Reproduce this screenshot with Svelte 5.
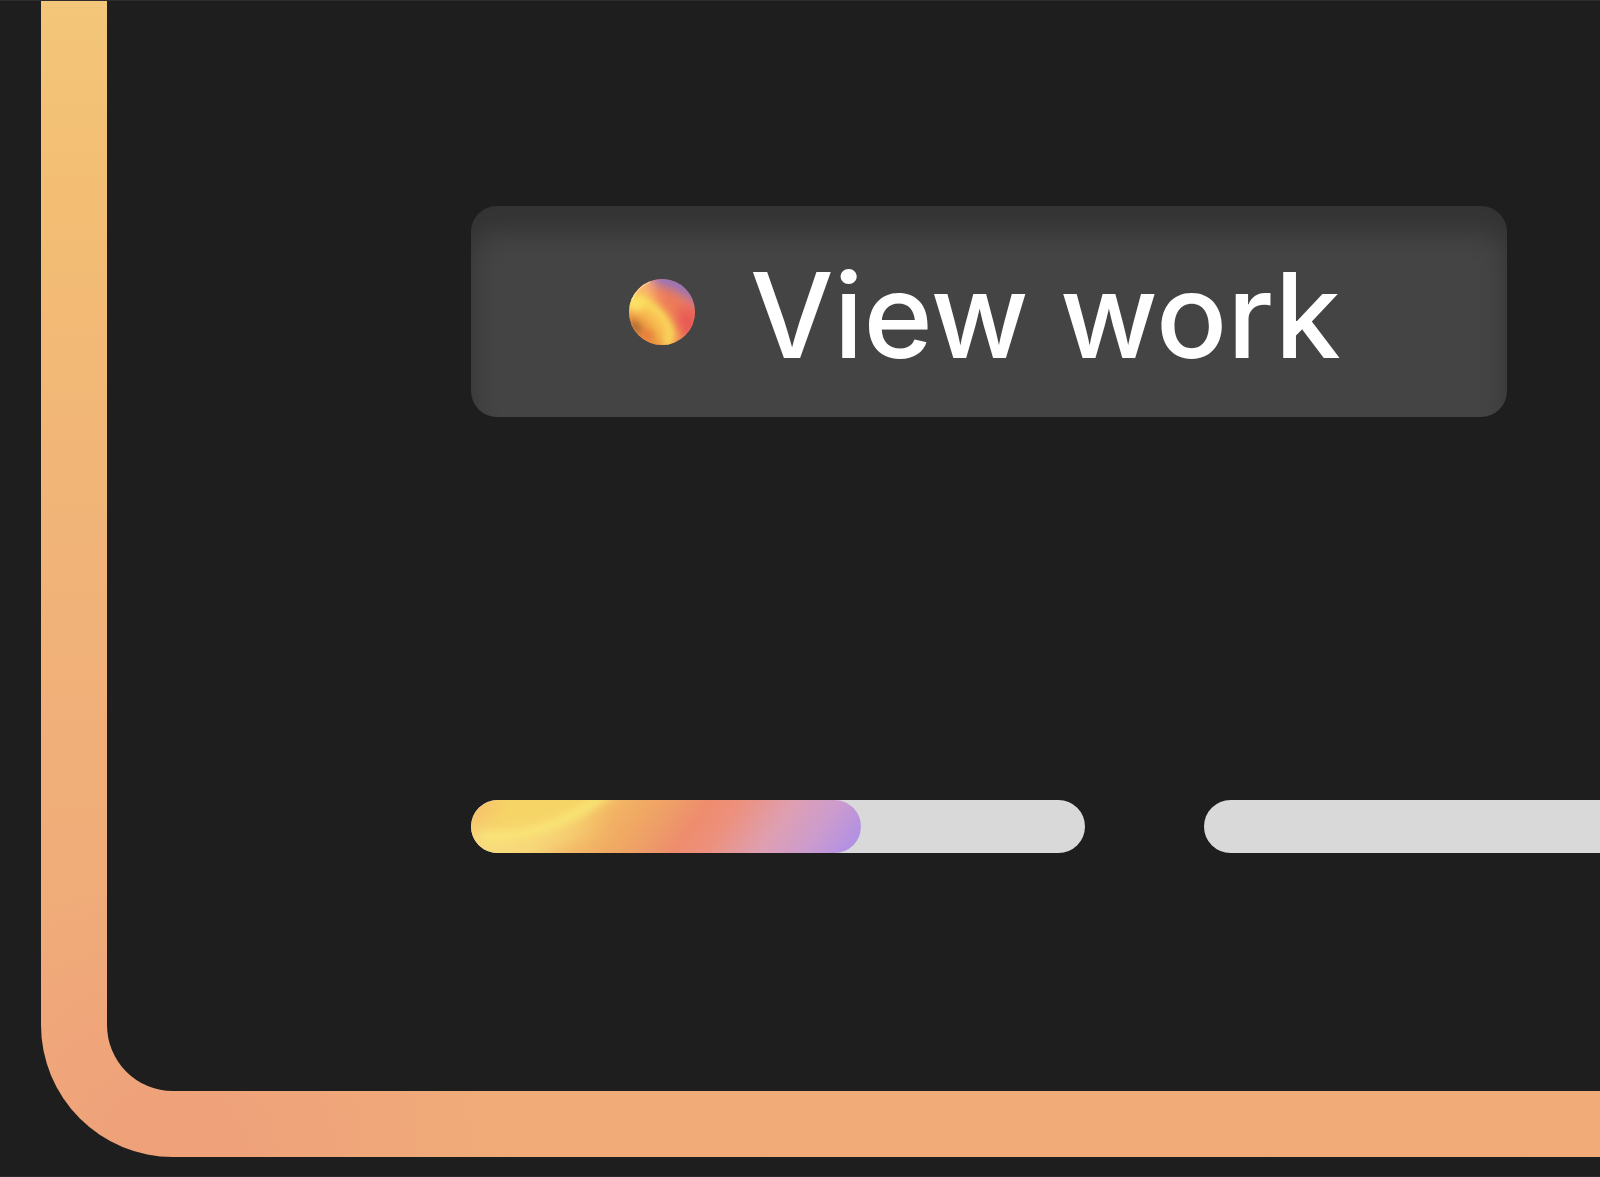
<script>
  const slides = [
    { label: 'Slide 1', value: 63.5 },
    { label: 'Slide 2', value: 0 }
  ];
</script>

<main class="page">
  <section class="frame">
    <div class="panel">
      <button class="view" type="button">
        <svg class="orb" viewBox="0 0 66 66" aria-hidden="true">
          <defs>
            <clipPath id="orb-clip"><circle cx="33" cy="33" r="33" /></clipPath>
            <filter id="orb-soft" x="-50%" y="-50%" width="200%" height="200%">
              <feGaussianBlur stdDeviation="6" />
            </filter>
            <filter id="orb-fine" x="-50%" y="-50%" width="200%" height="200%">
              <feGaussianBlur stdDeviation="3" />
            </filter>
          </defs>
          <g clip-path="url(#orb-clip)">
            <rect width="66" height="66" fill="#ed7a58" />
            <g filter="url(#orb-soft)">
              <ellipse cx="58" cy="44" rx="12" ry="16" fill="#e85a55" />
              <path d="M22 -12H80V28L62 20L42 8L22 3Z" fill="#8a74c8" />
              <path d="M-8 -8H18L24 10L30 28L10 36L-8 26Z" fill="#fbb76c" />
              <path d="M-8 36L8 36L26 46L34 74H-8Z" fill="#e58f3c" />
              <path d="M-6 26Q26 20 42 66" fill="none" stroke="#fbc252" stroke-width="18" />
            </g>
            <g filter="url(#orb-fine)">
              <ellipse cx="7" cy="23" rx="11" ry="8" fill="#fbe468" />
              <path d="M4 20Q32 26 41 52L38 72" fill="none" stroke="#f9dc5c" stroke-width="6" />
              <ellipse cx="7" cy="48" rx="3" ry="8" fill="#9c6030" transform="rotate(-35 7 48)" />
              <ellipse cx="18" cy="56" rx="7" ry="4" fill="#ea7c3c" transform="rotate(25 18 56)" />
            </g>
            <path d="M3 21A32 32 0 0 1 21 3" fill="none" stroke="#fff3dc" stroke-opacity=".6" stroke-width="1" />
          </g>
        </svg>
        <span class="label">View work</span>
      </button>

      <div class="slides">
        {#each slides as slide}
          <div
            class="track"
            role="progressbar"
            aria-label={slide.label}
            aria-valuemin="0"
            aria-valuemax="100"
            aria-valuenow={slide.value}
          >
            {#if slide.value > 0}
              <div class="fill" style:width="{slide.value}%">
                <svg viewBox="0 0 390 53" preserveAspectRatio="none" aria-hidden="true">
                  <defs>
                    <linearGradient id="sunset" gradientUnits="userSpaceOnUse" x1="0" y1="0" x2="287" y2="201">
                      <stop offset="0" stop-color="#f6c46c" />
                      <stop offset=".34" stop-color="#f2b565" />
                      <stop offset=".42" stop-color="#f0a863" />
                      <stop offset=".48" stop-color="#ee9d68" />
                      <stop offset=".56" stop-color="#ee8c6e" />
                      <stop offset=".63" stop-color="#ed907c" />
                      <stop offset=".76" stop-color="#de9fb2" />
                      <stop offset=".86" stop-color="#cd9ccc" />
                      <stop offset=".97" stop-color="#b190e4" />
                    </linearGradient>
                    <filter id="wide" x="-30%" y="-60%" width="160%" height="220%">
                      <feGaussianBlur stdDeviation="10" />
                    </filter>
                    <filter id="narrow" x="-30%" y="-60%" width="160%" height="220%">
                      <feGaussianBlur stdDeviation="4" />
                    </filter>
                  </defs>
                  <rect width="390" height="53" fill="url(#sunset)" />
                  <path d="M30 -20H150L110 24L40 40L0 36L20 16Z" fill="#f6d566" filter="url(#wide)" />
                  <path d="M-20 70H40L130 24L40 34L-20 26Z" fill="#f8dc7c" filter="url(#wide)" />
                  <path d="M10 37Q84 38 142 -12" fill="none" stroke="#fae878" stroke-width="8" filter="url(#narrow)" />
                </svg>
              </div>
            {/if}
          </div>
        {/each}
      </div>
    </div>
  </section>
</main>

<style>
  :global(body) {
    margin: 0;
    background: #1e1e1e;
  }

  .page {
    box-sizing: border-box;
    display: flex;
    min-height: 100vh;
    padding: 0 0 19px 41px;
    overflow: hidden;
    background: #1e1e1e;
    border-top: 1px solid #2d2d2d;
    border-bottom: 1px solid #2d2a2b;
  }

  .frame {
    flex: 1;
    display: flex;
    min-width: 0;
    padding: 0 0 66px 66px;
    border-bottom-left-radius: 132px;
    background:
      radial-gradient(ellipse 320px 300px at 130px 100%, #efa27a 20%, #efa27a00 100%),
      linear-gradient(180deg, #f3c679 0%, #f3be74 16%, #f1b478 45%, #f0ad79 72%, #f0ab79 100%);
  }

  .panel {
    flex: 1;
    display: flex;
    flex-direction: column;
    align-items: flex-start;
    gap: 383px;
    min-width: 0;
    padding: 205px 0 0 364px;
    overflow: hidden;
    background: #1e1e1e;
    border-bottom-left-radius: 66px;
  }

  .view {
    display: flex;
    align-items: center;
    gap: 55px;
    height: 211px;
    padding: 0 166px 0 158px;
    border: 0;
    border-radius: 26px;
    background: #444;
    box-shadow: inset 0 26px 26px #0000003f;
    color: #fff;
    font: 500 118px/144px Inter, sans-serif;
    white-space: nowrap;
    cursor: pointer;
  }

  .label {
    padding-top: 6px;
  }

  .orb {
    flex: none;
    width: 66px;
    height: 66px;
  }

  .slides {
    display: flex;
    gap: 119px;
  }

  .track {
    flex: none;
    width: 614px;
    height: 53px;
    overflow: hidden;
    border-radius: 27px;
    background: #d9d9d9;
  }

  .fill {
    height: 100%;
    overflow: hidden;
    border-radius: 27px;
  }

  .fill svg {
    display: block;
    width: 100%;
    height: 100%;
  }
</style>
